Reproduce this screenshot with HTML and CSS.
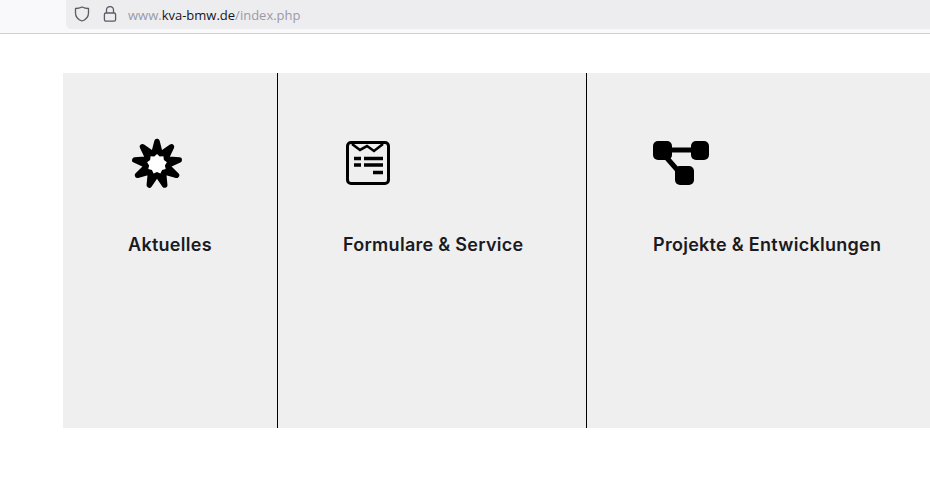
FILE: index.html
```html
<!DOCTYPE html>
<html lang="de">
<head>
<meta charset="utf-8">
<title>KVA BMW</title>
<link rel="stylesheet" href="styles.css">
</head>
<body>
<header class="toolbar">
  <div class="urlbar">
    <svg class="tb-icon shield" viewBox="0 0 16 16" width="16" height="16"><path d="M8 1 C10 2 12.5 2.5 14.5 2.5 V7 C14.5 11 11.5 13.8 8 15 C4.5 13.8 1.5 11 1.5 7 V2.5 C3.5 2.5 6 2 8 1 Z" fill="none" stroke="#5b5b66" stroke-width="1.3" stroke-linejoin="round"/></svg>
    <svg class="tb-icon lock" viewBox="0 0 16 16" width="16" height="16"><path d="M4.5 7 V4 a3.5 3.5 0 0 1 7 0 V7" fill="none" stroke="#5b5b66" stroke-width="1.3"/><rect x="2.4" y="7" width="11.2" height="8.2" rx="1.6" fill="none" stroke="#5b5b66" stroke-width="1.3"/></svg>
    <span class="url">www.<b class="domain">kva-bmw.de</b>/index.php</span>
  </div>
</header>
<main class="page">
  <section class="tiles">
    <a class="tile tile-a">
      <div class="icon-box box-star">
        <svg class="icon" viewBox="4 4 52 52" width="52" height="52">
          <path d="M30 7.5 33.4 20.6 44.5 12.8 38.7 25 52.2 26.1 39.8 31.7 49.5 41.25 36.4 37.7 37.7 51.1 30 40 22.3 51.1 23.6 37.7 10.5 41.25 20.2 31.7 7.8 26.1 21.3 25 15.5 12.8 26.6 20.6Z" fill="#000" stroke="#000" stroke-width="5.5" stroke-linejoin="round"/>
          <path d="M30 20 32.7 22.5 36.4 22.3 36.9 26 39.9 28.3 37.9 31.4 38.7 35 35.1 36.1 33.4 39.4 30 38 26.6 39.4 24.9 36.1 21.3 35 22.1 31.4 20.1 28.3 23.1 26 23.6 22.3 27.3 22.5Z" fill="#fff"/>
        </svg>
      </div>
      <h2 class="label">Aktuelles</h2>
    </a>
    <a class="tile tile-b">
      <div class="icon-box box-form">
        <svg class="icon" viewBox="0 0 44 44" width="44" height="44">
          <rect x="1.5" y="1.5" width="41" height="41" rx="3.5" fill="none" stroke="#000" stroke-width="3"/>
          <path d="M6 3 14 9 21 5 28 10 37 3" fill="none" stroke="#000" stroke-width="2.6"/>
          <path d="M8 17.5H15M18 17.5H37M8 24H15M18 24H37M27 31.5H37" fill="none" stroke="#000" stroke-width="3.4"/>
        </svg>
      </div>
      <h2 class="label">Formulare &amp; Service</h2>
    </a>
    <a class="tile tile-c">
      <div class="icon-box box-net">
        <svg class="icon" viewBox="0 0 58 46" width="58" height="46">
          <path d="M15 10H45M14 17 28 33" fill="none" stroke="#000" stroke-width="5"/>
          <rect x="1" y="1" width="19" height="19" rx="5" fill="#000"/>
          <rect x="39" y="1" width="18" height="19" rx="5" fill="#000"/>
          <rect x="23" y="26" width="19" height="19" rx="5" fill="#000"/>
        </svg>
      </div>
      <h2 class="label">Projekte &amp; Entwicklungen</h2>
    </a>
  </section>
</main>
</body>
</html>
```
FILE: styles.css
```css
* { box-sizing: border-box; }
html, body { margin: 0; padding: 0; height: 100%; background: #fff; overflow: hidden; }
.toolbar { height: 34px; padding-left: 66px; background: #f9f9fb; border-bottom: 1px solid #cfcfd8; }
.urlbar { display: flex; align-items: center; height: 29px; padding-left: 8px; background: #ededf0; border-bottom-left-radius: 5px; }
.tb-icon { flex: none; margin-bottom: 2px; }
.lock { margin-left: 12px; }
.url { margin-left: 10px; font: 13px "Open Sans", sans-serif; color: #9a9aa6; white-space: nowrap; }
.domain { font-weight: 400; color: #15141a; }
.page { padding: 39px 0 0 63px; }
.tiles { display: grid; grid-template-columns: 215px 309px 1fr; height: 355px; background: #efefef; }
.tile { display: block; padding-top: 65px; border-right: 1px solid #000; color: #1a1a1f; }
.tile-a { padding-left: 65px; }
.tile-b { padding-left: 65px; }
.tile-c { padding-left: 66px; border-right: 0; }
.icon-box { height: 96px; }
.box-star { padding-left: 3px; }
.box-form { padding: 3px 0 0 3px; }
.box-net { padding-top: 2px; margin-left: -1px; }
.icon { display: block; }
.label { margin: 0; font: 600 18px/22px Inter, sans-serif; letter-spacing: 0.28px; white-space: nowrap; }
```
